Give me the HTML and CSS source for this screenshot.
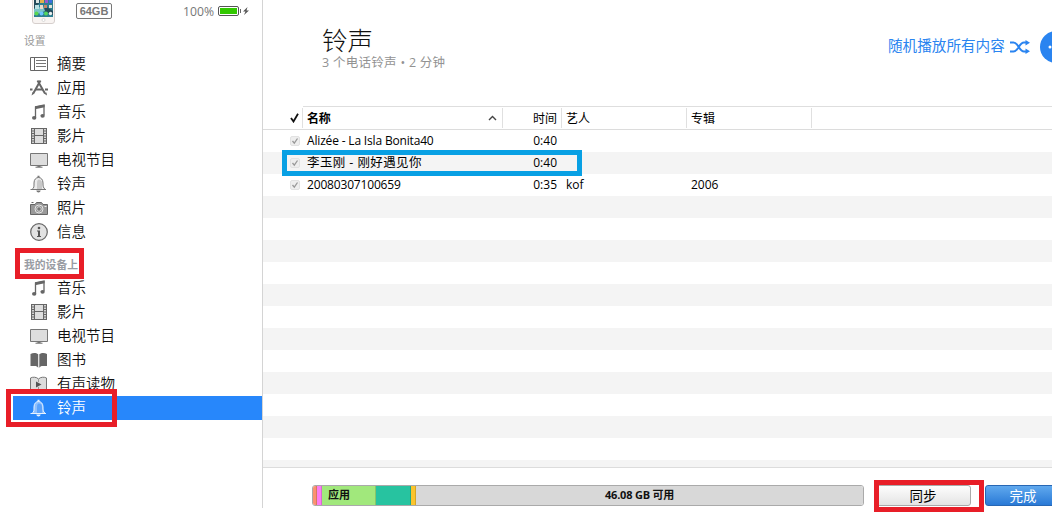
FILE: index.html
```html
<!DOCTYPE html>
<html lang="zh-CN">
<head>
  <meta charset="UTF-8">
  <title>铃声</title>
  <link rel="stylesheet" href="styles.css">
</head>
<body>

  <!-- shared icons -->
  <svg class="sprite">
    <symbol id="i-summary" viewBox="0 0 18 18">
      <path d="M.5 2.500h17v13H.5zM4.500 2.500v13" fill="none" stroke="#666"/>
      <path d="M6 5.500h10M6 8.500h10M6 11.500h10" stroke="#777"/>
    </symbol>
    <symbol id="i-apps" viewBox="0 0 18 18">
      <path d="M10.500 1.500L3.500 14M7.500 1.500l7.500 13" fill="none" stroke="#666" stroke-width="2"/>
      <path d="M0 10.500h2.500M5 10.500h8M15 10.500h3" stroke="#666" stroke-width="2"/>
      <path d="M2.500 13l-1 3.500 3-2zM14 14.500l3 2-.5-3z" fill="#666"/>
    </symbol>
    <symbol id="i-music" viewBox="0 0 18 18">
      <path d="M5.500 14V4l8.500-1.500V12" fill="none" stroke="#666" stroke-width="1.300"/>
      <path d="M5 3.200l9.600-2v3L5 6.200z" fill="#666"/>
      <ellipse cx="4.200" cy="14.800" rx="2.200" ry="1.900" fill="#666"/>
      <ellipse cx="12.600" cy="12.800" rx="2.200" ry="1.900" fill="#666"/>
    </symbol>
    <symbol id="i-film" viewBox="0 0 18 18">
      <path d="M1 1h16v16H1z" fill="#666"/>
      <path d="M5 2h8v6H5zM5 9h8v7H5z" fill="#ddd"/>
      <path d="M3 2v15M15 2v15" stroke="#ddd" stroke-width="1.800" stroke-dasharray="1.500 1"/>
    </symbol>
    <symbol id="i-tv" viewBox="0 0 18 18">
      <path d="M.5 2.500h17v12H.5z" fill="#ddd" stroke="#777"/>
      <path d="M7.500 15h3v.5l2 .3v1h-7v-1l2-.3z" fill="#777"/>
    </symbol>
    <symbol id="i-bell" viewBox="0 0 18 18">
      <path d="M2 14.500c2.300-1.500 2-3.500 2-6.500C4 4.500 6 2.500 8.500 2.500s4.500 2 4.500 5.500c0 3 0 5 2.500 6.500z" class="bell-body"/>
      <path d="M8.500 4.500C7.500 5 7 6 7 8.500V14h5V8c0-2-1.500-3.500-3.500-3.500z" class="bell-shade"/>
      <path d="M.5 14.500H16" class="bell-line"/>
      <path d="M6.300 15.500h4.400c-.4 2.600-4 2.600-4.400 0zM7.500.8h2V2.500h-2z" class="bell-clap"/>
    </symbol>
    <symbol id="i-camera" viewBox="0 0 18 18">
      <path d="M.5 5.500h4.500l1.500-2h5l1.500 2h4.500v10H.5z" fill="#999" stroke="#666"/>
      <path d="M1.500 3.500h2" stroke="#666"/>
      <circle cx="9" cy="10" r="4" fill="#888" stroke="#e5e5e5"/>
      <circle cx="9" cy="10" r="2.300" fill="#777" stroke="#ddd"/>
      <path d="M14.500 7.500h2" stroke="#eee"/>
    </symbol>
    <symbol id="i-info" viewBox="0 0 18 18">
      <circle cx="9" cy="9" r="8.300" fill="#e2e2e2" stroke="#666" stroke-width="1.200"/>
      <path d="M7 7.500h3V13h1v1H7v-1h1V8.500H7z" fill="#555"/>
      <circle cx="9" cy="5" r="1.300" fill="#555"/>
    </symbol>
    <symbol id="i-book" viewBox="0 0 18 18">
      <path d="M.5 3c2.500-1.500 5.500-1.500 7.700.3V17c-.6-1.600-2-2-3.200-2H.5zM17 3c-2.500-1.500-5.500-1.500-7.700.3V17c.6-1.600 2-2 3.200-2H17z" fill="#666"/>
    </symbol>
    <symbol id="i-audiobook" viewBox="0 0 18 18">
      <path d="M.5 3C2.500 1.800 6.500 1.800 8.500 4c2-2.200 6-2.200 8-1v12h-6l-2 1.500-2-1.500h-6z" fill="#ddd" stroke="#777"/>
      <path d="M8.500 4v3M8.500 12v4" stroke="#999"/>
      <path d="M6 6.500l5.500 3-5.500 3z" fill="#555"/>
    </symbol>
    <symbol id="i-tick" viewBox="0 0 10 10">
      <rect x=".5" y=".5" width="9" height="9" rx="1.500" fill="#eee" stroke="#e2e2e2"/>
      <path d="M2.500 5l1.800 2.200L7.500 2.500" fill="none" stroke="#999" stroke-width="1.300"/>
    </symbol>
  </svg>

  <div class="app">
    <div class="sidebar">
      <div class="device">
        <svg class="phone" width="23" height="24" viewBox="0 0 23 24">
          <path d="M.5-4h22v25q0 2.500-2.500 2.500H3Q.5 23.500.5 21z" fill="#f8f4f2" stroke="#d6cfcd"/>
          <path d="M2 0h19v17H2z" fill="#2e7f91"/>
          <path d="M2 0h8l-8 9zM13 6l8 5v4l-9-4z" fill="#244b5b"/>
          <path d="M2 9l9-3 2 5-11 4z" fill="#7cc3c8"/>
          <path d="M4 0h3v3H4z" fill="#d9e4e2"/>
          <path d="M8 0h4v3H8z" fill="#e2b24b"/>
          <path d="M13 0h3v3h-3z" fill="#9b58cb"/>
          <path d="M17 0h3v3h-3z" fill="#3b6fdf"/>
          <path d="M3 5h4v4H3z" fill="#b8dfe2"/>
          <path d="M8 5h3v4H8z" fill="#e9dccb"/>
          <path d="M12 5h3v3h-3z" fill="#c98668"/>
          <path d="M17 5h3v3h-3z" fill="#dfe3dc"/>
          <circle cx="4.500" cy="13.500" r="2" fill="#5bd650"/>
          <circle cx="9.500" cy="13.500" r="2" fill="#6cc4ff"/>
          <circle cx="14" cy="13.500" r="2" fill="#54d65e"/>
          <circle cx="18.500" cy="13.500" r="1.700" fill="#e9f0ef"/>
          <circle cx="11.500" cy="20" r="1.500" fill="#fff" stroke="#ccc" stroke-width=".7"/>
        </svg>
        <span class="capacity">64GB</span>
        <span class="percent">100%</span>
        <svg class="battery" width="32" height="12" viewBox="0 0 32 12">
          <rect x=".5" y="1.500" width="20" height="9" rx="1.500" fill="#fff" stroke="#555"/>
          <path d="M2 3h17v6H2z" fill="#32c800"/>
          <path d="M22.500 4v4" stroke="#666"/>
          <path d="M29.500 2L25 6.500h2.500L26 10l5-4.500h-2.500z" fill="#555"/>
        </svg>
      </div>

      <div class="group">设置</div>
      <ul class="nav">
        <li><svg><use href="#i-summary"/></svg>摘要</li>
        <li><svg><use href="#i-apps"/></svg>应用</li>
        <li><svg><use href="#i-music"/></svg>音乐</li>
        <li><svg><use href="#i-film"/></svg>影片</li>
        <li><svg><use href="#i-tv"/></svg>电视节目</li>
        <li><svg><use href="#i-bell"/></svg>铃声</li>
        <li><svg><use href="#i-camera"/></svg>照片</li>
        <li><svg><use href="#i-info"/></svg>信息</li>
      </ul>

      <div class="group on-device">我的设备上<div class="mark mark-group"></div></div>
      <ul class="nav">
        <li><svg><use href="#i-music"/></svg>音乐</li>
        <li><svg><use href="#i-film"/></svg>影片</li>
        <li><svg><use href="#i-tv"/></svg>电视节目</li>
        <li><svg><use href="#i-book"/></svg>图书</li>
        <li><svg><use href="#i-audiobook"/></svg>有声读物</li>
        <li class="selected"><svg><use href="#i-bell"/></svg>铃声<div class="mark mark-selected"></div></li>
      </ul>
    </div>

    <div class="main">
      <div class="header">
        <div class="heading">
          <h1>铃声</h1>
          <p>3 个电话铃声 • 2 分钟</p>
        </div>
        <div class="shuffle">
          <span>随机播放所有内容</span>
          <svg width="20" height="14" viewBox="0 0 20 14">
            <path d="M0 2.500h3.500c5 0 5.500 9 10.500 9h3M0 11.500h3.500c5 0 5.500-9 10.500-9h3" fill="none" stroke="#2a84f0" stroke-width="2"/>
            <path d="M15.500 0l4.500 2.700-4.500 2.800zM15.500 8.500l4.500 2.800-4.500 2.700z" fill="#2a84f0"/>
          </svg>
        </div>
        <svg class="more" width="12" height="32" viewBox="0 0 12 32">
          <circle cx="16" cy="16" r="16" fill="#2a84f0"/>
          <circle cx="10" cy="16" r="1.500" fill="#fff"/>
        </svg>
      </div>

      <div class="songs">
        <div class="row head">
          <div class="check"><svg width="9" height="10" viewBox="0 0 9 10"><path d="M1 5l2.500 3.500L8 .8" fill="none" stroke="#111" stroke-width="1.800"/></svg></div>
          <div class="name"><b>名称</b><svg width="9" height="6" viewBox="0 0 9 6"><path d="M1 5l3.500-3.500L8 5" fill="none" stroke="#444" stroke-width="1.400"/></svg></div>
          <div class="time">时间</div>
          <div class="artist">艺人</div>
          <div class="album">专辑</div>
        </div>
        <div class="row">
          <div class="check"><svg width="10" height="10"><use href="#i-tick"/></svg></div>
          <div class="name">Alizée - La Isla Bonita40</div>
          <div class="time">0:40</div>
        </div>
        <div class="row">
          <div class="check"><svg width="10" height="10"><use href="#i-tick"/></svg></div>
          <div class="name cjk">李玉刚 - 刚好遇见你</div>
          <div class="time">0:40</div>
          <div class="mark mark-song"></div>
        </div>
        <div class="row">
          <div class="check"><svg width="10" height="10"><use href="#i-tick"/></svg></div>
          <div class="name">20080307100659</div>
          <div class="time">0:35</div>
          <div class="artist">kof</div>
          <div class="album">2006</div>
        </div>
        <div class="filler"></div>
      </div>

      <div class="footer">
        <div class="storage">
          <div class="seg photos"></div>
          <div class="seg audio"></div>
          <div class="seg apps">应用</div>
          <div class="seg docs"></div>
          <div class="seg other"></div>
          <div class="free">46.08 GB 可用</div>
        </div>
        <div class="sync"><button class="btn">同步</button><div class="mark mark-sync"></div></div>
        <button class="btn done">完成</button>
      </div>
    </div>
  </div>

</body>
</html>
```

FILE: styles.css
```css
* {
  box-sizing: border-box;
}

body {
  margin: 0;
  width: 1052px;
  height: 514px;
  overflow: hidden;
  background: #fff;
  color: #111;
  font-family: "Open Sans", "Noto Sans CJK SC", sans-serif;
  font-size: 12px;
}

svg {
  display: block;
  flex: none;
}

.sprite {
  position: absolute;
  width: 0;
  height: 0;
}

.app {
  display: flex;
  height: 508px;
}

/* sidebar */
.sidebar {
  width: 263px;
  flex: none;
  border-right: 1px solid #d4d4d4;
}

.device {
  display: flex;
  height: 32px;
  padding-left: 32px;
  color: #777;
}

.capacity {
  width: 36px;
  height: 16px;
  margin: 3px 0 0 21px;
  border: 1px solid #777;
  border-radius: 2px;
  font: bold 11px/14px "Liberation Sans", sans-serif;
  text-align: center;
}

.percent {
  margin: 3px 0 0 71px;
  width: 35px;
  font-size: 12.200px;
  line-height: 18px;
}

.battery {
  margin-top: 5px;
}

.group {
  position: relative;
  height: 20px;
  padding-left: 24px;
  color: #999;
  font-size: 10.800px;
  line-height: 18px;
}

.on-device {
  height: 32px;
  line-height: 42px;
  font-weight: bold;
  color: #999ca3;
}

.nav {
  list-style: none;
  margin: 0;
  padding: 0;
}

.nav li {
  position: relative;
  display: flex;
  align-items: center;
  height: 24px;
  padding-left: 17px;
  margin-left: 13px;
  gap: 9px;
  font-size: 14.500px;
  line-height: 24px;
  font-weight: 350;
}

.nav svg {
  width: 18px;
  height: 18px;
}

.nav .selected {
  --bell-body: #8fc0fd;
  --bell-shade: #5ca3fb;
  --bell-line: #e8f3ff;
  background: #2787fb;
  color: #fff;
}

.bell-body {
  fill: var(--bell-body, #ececec);
  stroke: var(--bell-line, #777);
}

.bell-shade {
  fill: var(--bell-shade, #c8c8c8);
}

.bell-line {
  stroke: var(--bell-line, #777);
}

.bell-clap {
  fill: var(--bell-line, #777);
}

/* main area */
.main {
  flex: 1;
  min-width: 0;
}

.header {
  display: flex;
  height: 106px;
}

.heading {
  width: 625px;
  flex: none;
  padding: 25px 0 0 59px;
}

h1 {
  margin: 0;
  font-size: 25.500px;
  line-height: 30px;
  font-weight: 300;
}

.heading p {
  margin: 0;
  color: #929292;
  font-size: 12.500px;
  line-height: 15px;
  letter-spacing: 0.28px;
}

.shuffle {
  display: flex;
  align-items: center;
  gap: 5px;
  height: 26px;
  margin-top: 33px;
  color: #2a84f0;
  font-size: 14.600px;
  line-height: 20px;
  white-space: nowrap;
}

.shuffle span {
  padding-bottom: 2px;
}

.shuffle svg {
  margin-top: 2px;
}

.more {
  margin: 31px 0 0 10px;
}

/* song list */
.songs {
  display: flex;
  flex-direction: column;
  height: 362px;
  border-bottom: 1px solid #dcdcdc;
}

.row {
  position: relative;
  display: grid;
  grid-template-columns: 40px 200px 59px 125px 125px;
  height: 22px;
  flex: none;
  line-height: 22px;
  color: #000;
}

.row:nth-child(odd) {
  background: #f4f4f4;
}

.row .check {
  display: flex;
  align-items: center;
  padding-left: 27px;
}

.name {
  display: flex;
  align-items: center;
  justify-content: space-between;
  padding: 0 5px 0 4px;
  white-space: nowrap;
  letter-spacing: -0.170px;
}

.cjk {
  font-size: 12.500px;
  letter-spacing: 0.4px;
}

.time {
  padding-right: 5px;
  text-align: right;
}

.artist,
.album {
  padding-left: 4px;
}

.songs .head {
  height: 24px;
  background: linear-gradient(#dedede, #dedede) 40px 0 / 100% 1px no-repeat;
  border-bottom: 1px solid #dcdcdc;
}

.head > div {
  height: 20px;
  margin-top: 2px;
  line-height: 21px;
  border-right: 1px solid #e0e0e0;
}

.head .time {
  padding-right: 4px;
}

.filler {
  flex: 1;
  background: repeating-linear-gradient(#f4f4f4 0 22px, #fff 22px 44px);
}

/* bottom bar */
.footer {
  display: flex;
  padding: 17px 0 0 49px;
}

.storage {
  display: flex;
  width: 552px;
  height: 21px;
  flex: none;
  border: 1px solid #aaa;
  border-radius: 3px;
  overflow: hidden;
  font-size: 11px;
  font-weight: bold;
  line-height: 18px;
}

.seg {
  border-right: 1px solid rgba(0, 0, 0, 0.15);
}

.photos {
  width: 4px;
  background: #fb9170;
}

.audio {
  width: 5px;
  background: #fb7df2;
}

.apps {
  width: 54px;
  padding-left: 6px;
  background: #a1e87c;
}

.docs {
  width: 35px;
  background: #27c3a0;
}

.other {
  width: 5px;
  background: #fbc42c;
}

.free {
  flex: 1;
  background: #d8d8d8;
  text-indent: 189px;
  letter-spacing: -0.2px;
}

.btn {
  width: 96px;
  height: 21px;
  padding: 0;
  border: 1px solid #aaa;
  border-radius: 3px;
  background: linear-gradient(#fdfdfd, #e4e4e4);
  color: #000;
  font-family: inherit;
  font-size: 13.500px;
  line-height: 16px;
}

.sync {
  position: relative;
  width: 110px;
  margin-left: 11px;
  flex: none;
}

.done {
  flex: none;
  width: 76px;
  border-color: #2767b4;
  background: linear-gradient(#60a9ee, #2979d6);
  color: #fff;
}

/* highlight frames */
.mark {
  position: absolute;
  border: 5px solid #e81e28;
}

.mark-group {
  left: 15px;
  top: 4px;
  width: 69px;
  height: 31px;
  z-index: 1;
}

.mark-selected {
  left: -7px;
  top: -7px;
  width: 111px;
  height: 38px;
}

.mark-song {
  left: 19px;
  top: -2px;
  width: 300px;
  height: 26px;
  border-color: #08a0e4;
  z-index: 1;
}

.mark-sync {
  left: -1px;
  top: -5px;
  width: 110px;
  height: 32px;
}
```
